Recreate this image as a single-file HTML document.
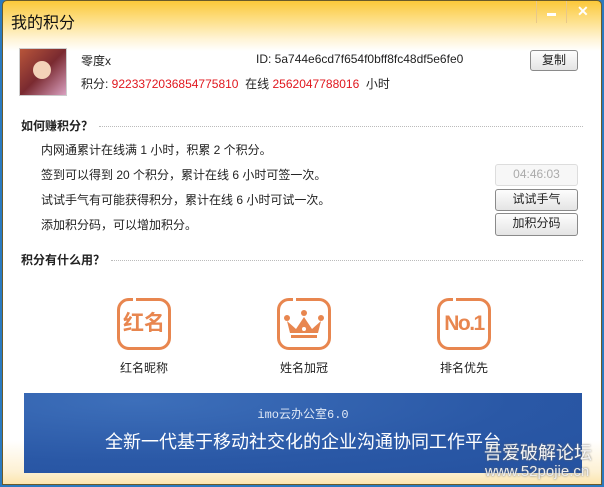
<!DOCTYPE html>
<html><head><meta charset="utf-8"><style>
*{margin:0;padding:0;box-sizing:border-box}
body{width:604px;height:487px;overflow:hidden;font-family:"Liberation Sans","Noto Sans CJK SC",sans-serif;font-size:12px;color:#222;background:#2a7ac0}
.win{position:absolute;left:2px;top:0;width:600px;height:485px;background:linear-gradient(#fcc83a 0px,#fde08a 20px,#fff4d6 38px,#fff 50px,#fff 440px,#fdf1d4 470px,#fbe3a8 485px);border:1px solid #6a5a2a;border-radius:5px 5px 0 0}
.t{position:absolute;white-space:nowrap}
.red{color:#e0171e}
.btn{position:absolute;border:1px solid #8a8a8a;border-radius:3px;background:linear-gradient(#fdfdfd,#e4e4e4);text-align:center;line-height:19px;font-size:12px}
.h{position:absolute;left:18px;font-weight:bold;font-size:12px}
.dot{position:absolute;border-top:1px dotted #bbb;height:0}
.ic{position:absolute;width:54px;height:52px;border:3px solid #e8864f;border-radius:12px;color:#e8864f;font-weight:bold;text-align:center}
.ic:before{content:"";position:absolute;top:-4px;left:13px;width:3px;height:5px;background:#fff}
.lb{position:absolute;width:80px;text-align:center}
</style></head><body>
<div class="win">
<div class="t" style="left:8px;top:8px;font-size:16px;color:#111">我的积分</div>
<div style="position:absolute;left:533px;top:0;width:1px;height:22px;background:#e8c88a"></div>
<div style="position:absolute;left:563px;top:0;width:1px;height:22px;background:#e8c88a"></div>
<div style="position:absolute;left:544px;top:12px;width:9px;height:3px;background:#fff"></div>
<div class="t" style="left:574px;top:2px;color:#fff;font-size:14px;font-weight:bold">✕</div>

<div style="position:absolute;left:16px;top:47px;width:48px;height:48px;border:1px solid #ccc;background:linear-gradient(135deg,#b8553a,#7a2a30 50%,#d9a0c0);"></div>
<div style="position:absolute;left:30px;top:60px;width:18px;height:18px;border-radius:50%;background:#f3d2b8"></div>
<div class="t" style="left:78px;top:51px">零度x</div>
<div class="t" style="left:253px;top:51px">ID: 5a744e6cd7f654f0bff8fc48df5e6fe0</div>
<div class="btn" style="left:527px;top:49px;width:48px;height:21px">复制</div>
<div class="t" style="left:78px;top:74px">积分: <span class="red">9223372036854775810</span>&nbsp; 在线 <span class="red">2562047788016</span>&nbsp; 小时</div>

<div class="h" style="top:116px">如何赚积分？</div>
<div class="dot" style="left:96px;top:125px;width:484px"></div>
<div class="t" style="left:38px;top:140px">内网通累计在线满 1 小时，积累 2 个积分。</div>
<div class="t" style="left:38px;top:165px">签到可以得到 20 个积分，累计在线 6 小时可签一次。</div>
<div class="t" style="left:38px;top:190px">试试手气有可能获得积分，累计在线 6 小时可试一次。</div>
<div class="t" style="left:38px;top:215px">添加积分码，可以增加积分。</div>
<div class="btn" style="left:492px;top:163px;width:83px;height:22px;color:#aaa;border-color:#ddd;background:#f7f7f7">04:46:03</div>
<div class="btn" style="left:492px;top:188px;width:83px;height:22px">试试手气</div>
<div class="btn" style="left:492px;top:212px;width:83px;height:23px">加积分码</div>

<div class="h" style="top:250px">积分有什么用？</div>
<div class="dot" style="left:108px;top:259px;width:472px"></div>

<div class="ic" style="left:114px;top:297px;font-size:21px;line-height:46px">红名</div>
<div class="ic" style="left:274px;top:297px">
<svg width="48" height="46" viewBox="0 0 48 46"><g fill="#e8864f"><circle cx="7" cy="17" r="3"/><circle cx="24" cy="12" r="3"/><circle cx="41" cy="17" r="3"/><path d="M7 20 L16 28 L24 16 L32 28 L41 20 L38 32 L10 32Z"/><rect x="11" y="34" width="26" height="3"/></g><circle cx="24" cy="28" r="2" fill="#fff"/></svg></div>
<div class="ic" style="left:434px;top:297px;font-size:21px;line-height:46px;letter-spacing:-1.5px">No.1</div>
<div class="lb" style="left:101px;top:358px">红名昵称</div>
<div class="lb" style="left:261px;top:358px">姓名加冠</div>
<div class="lb" style="left:421px;top:358px">排名优先</div>

<div style="position:absolute;left:21px;top:392px;width:558px;height:80px;background:radial-gradient(ellipse at 20% 10%,#3d6fba,#2a58a6 60%,#2552a0)">
<div class="t" style="left:0;width:558px;text-align:center;top:12px;color:#dfe8f6;font-family:'Liberation Mono','Noto Sans CJK SC',monospace;font-size:12px">imo云办公室6.0</div>
<div class="t" style="left:0;width:558px;text-align:center;top:35px;color:#fff;font-size:18px">全新一代基于移动社交化的企业沟通协同工作平台</div>
</div>
<div class="t" style="left:481px;top:438px;color:#f4f4f4;font-size:18px;text-shadow:0 0 2px #666">吾爱破解论坛</div>
<div class="t" style="left:482px;top:462px;color:#eee;font-size:15px;text-shadow:0 0 2px #666">www.52pojie.cn</div>
</div>
</body></html>
